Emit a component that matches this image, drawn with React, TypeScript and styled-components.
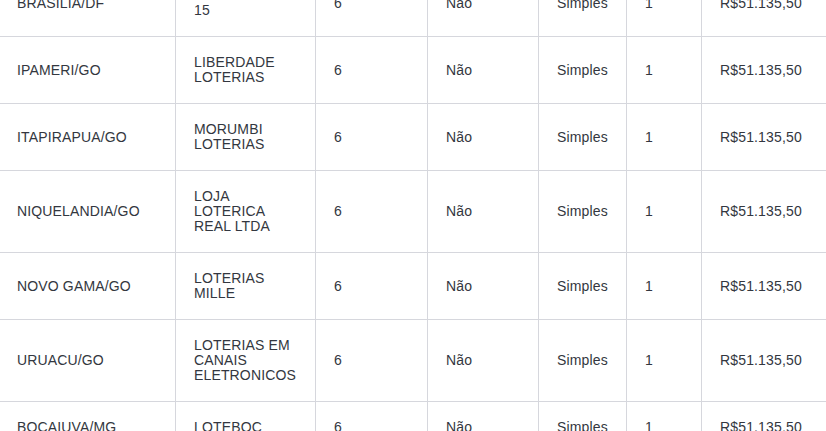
import React from 'react';
import styled, { createGlobalStyle } from 'styled-components';

const GlobalStyle = createGlobalStyle`
    html, body {
        margin: 0;
        padding: 0;
        background: #ffffff;
        overflow: hidden;
    }
`;

const Viewport = styled.div`
    width: 826px;
    height: 431px;
    overflow: hidden;
`;

const Grid = styled.div`
    display: grid;
    grid-template-columns: 177px 140px 112px 111px 88px 75px 160px;
    margin: -30px 0 0 -1px;
    font-family: "Liberation Sans", Arial, sans-serif;
    font-size: 14px;
    line-height: 15px;
    letter-spacing: 0.15px;
    color: #333740;
`;

const Row = styled.div`
    display: contents;
`;

const Cell = styled.div`
    box-sizing: border-box;
    display: flex;
    align-items: center;
    padding: 18px;
    border-right: 1px solid #d6d7dd;
    border-bottom: 1px solid #d6d7dd;
`;

type Agency = {
    city: string;
    name: string;
    hits: number;
    shared: string;
    kind: string;
    quotas: number;
    prize: string;
};

const rows: Agency[] = [
    { city: 'BRASILIA/DF', name: 'LOTERIAS SUL 15', hits: 6, shared: 'Não', kind: 'Simples', quotas: 1, prize: 'R$51.135,50' },
    { city: 'IPAMERI/GO', name: 'LIBERDADE LOTERIAS', hits: 6, shared: 'Não', kind: 'Simples', quotas: 1, prize: 'R$51.135,50' },
    { city: 'ITAPIRAPUA/GO', name: 'MORUMBI LOTERIAS', hits: 6, shared: 'Não', kind: 'Simples', quotas: 1, prize: 'R$51.135,50' },
    { city: 'NIQUELANDIA/GO', name: 'LOJA LOTERICA REAL LTDA', hits: 6, shared: 'Não', kind: 'Simples', quotas: 1, prize: 'R$51.135,50' },
    { city: 'NOVO GAMA/GO', name: 'LOTERIAS MILLE', hits: 6, shared: 'Não', kind: 'Simples', quotas: 1, prize: 'R$51.135,50' },
    { city: 'URUACU/GO', name: 'LOTERIAS EM CANAIS ELETRONICOS', hits: 6, shared: 'Não', kind: 'Simples', quotas: 1, prize: 'R$51.135,50' },
    { city: 'BOCAIUVA/MG', name: 'LOTEBOC', hits: 6, shared: 'Não', kind: 'Simples', quotas: 1, prize: 'R$51.135,50' },
];

const App = () => {
    return (
        <Viewport>
            <GlobalStyle />
            <Grid>
                {rows.map((r, i) => (
                    <Row key={i}>
                        <Cell>{r.city}</Cell>
                        <Cell>{r.name}</Cell>
                        <Cell>{r.hits}</Cell>
                        <Cell>{r.shared}</Cell>
                        <Cell>{r.kind}</Cell>
                        <Cell>{r.quotas}</Cell>
                        <Cell>{r.prize}</Cell>
                    </Row>
                ))}
            </Grid>
        </Viewport>
    );
};

export default App;
